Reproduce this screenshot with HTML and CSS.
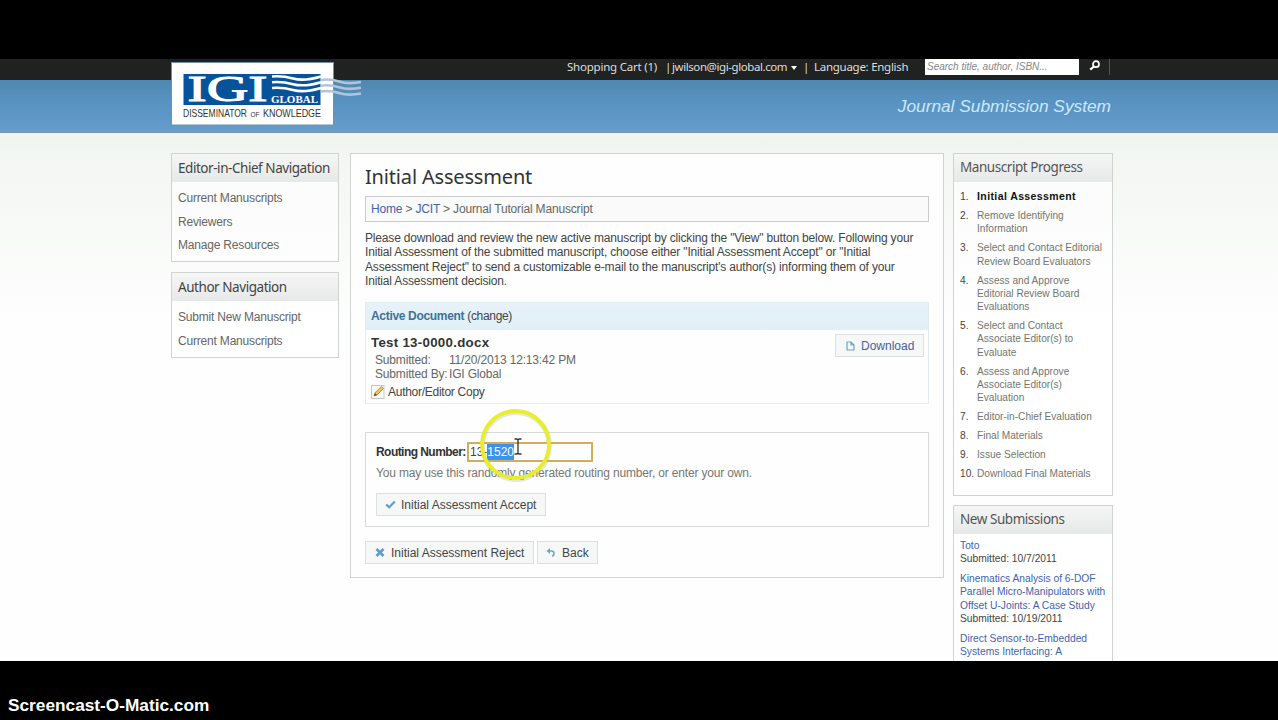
FILE: index.html
```html
<!DOCTYPE html>
<html lang="en">
<head>
<meta charset="utf-8">
<title>Initial Assessment - Journal Submission System</title>
<link rel="stylesheet" href="styles.css">
</head>
<body>
<div class="screen">
  <header class="header">
    <div class="topbar">
      <span class="cart">Shopping Cart (1)</span><span class="bar">|</span><span class="user">jwilson@igi-global.com</span><i class="caret"></i><span class="bar2">|</span><span class="lang">Language: English</span>
      <div class="search">Search title, author, ISBN...</div>
      <div class="search-btn"><svg width="12" height="12" viewBox="0 0 12 12"><circle cx="7" cy="4.2" r="3" fill="none" stroke="#fff" stroke-width="1.7"/><path d="M5 6.5L1.2 9.7" stroke="#fff" stroke-width="2.2"/></svg></div>
    </div>
    <div class="banner">Journal Submission System</div>
    <svg class="logo" width="192" height="66" viewBox="0 0 192 66">
      <rect x="0.5" y="0.5" width="162" height="62.500" fill="#fff" stroke="#6d93ae"/>
      <rect x="12.500" y="12" width="137" height="31" fill="#07539b"/>
      <text x="16.500" y="39" class="igi" textLength="80" lengthAdjust="spacingAndGlyphs">IGI</text>
      <g fill="none" stroke="#fff" stroke-width="2.600">
        <path d="M101 14.500q10 -1 21 2t28 -2M101 20.200q10 -1 21 2t28 -2M101 26q10 -1 21 2t28 -2"/>
      </g>
      <g fill="none" stroke="#b4c3d9" stroke-width="2.600">
        <path d="M150 18q9 -1.500 18 1.500t22 .5M150 23.700q9 -1.500 18 1.500t22 .5M150 29.500q9 -1.500 18 1.500t22 .5"/>
      </g>
      <text x="100" y="40.500" class="global" textLength="47" lengthAdjust="spacingAndGlyphs">GLOBAL</text>
      <text x="12" y="54.500" class="tag" textLength="64" lengthAdjust="spacingAndGlyphs">DISSEMINATOR</text>
      <text x="79.500" y="54.500" class="tag tag-of" textLength="9" lengthAdjust="spacingAndGlyphs">OF</text>
      <text x="92" y="54.500" class="tag" textLength="58" lengthAdjust="spacingAndGlyphs">KNOWLEDGE</text>
    </svg>
  </header>

  <div class="page">
    <aside class="left">
      <section class="box">
        <h3>Editor-in-Chief Navigation</h3>
        <ul class="nav"><li>Current Manuscripts</li><li>Reviewers</li><li>Manage Resources</li></ul>
      </section>
      <section class="box">
        <h3>Author Navigation</h3>
        <ul class="nav"><li>Submit New Manuscript</li><li>Current Manuscripts</li></ul>
      </section>
    </aside>

    <main class="main">
      <h1>Initial Assessment</h1>
      <div class="crumbs"><a>Home</a> &gt; <a>JCIT</a> &gt; Journal Tutorial Manuscript</div>
      <p class="intro">Please download and review the new active manuscript by clicking the "View" button below. Following your<br>Initial Assessment of the submitted manuscript, choose either "Initial Assessment Accept" or "Initial<br>Assessment Reject" to send a customizable e-mail to the manuscript's author(s) informing them of your<br>Initial Assessment decision.</p>
      <section class="doc">
        <div class="doc-head"><b>Active Document</b> (change)</div>
        <div class="doc-body">
          <div class="doc-info">
            <div class="doc-name">Test 13-0000.docx</div>
            <div class="meta"><span class="key">Submitted:</span><span>11/20/2013 12:13:42 PM</span></div>
            <div class="meta"><span class="key">Submitted By:</span><span>IGI Global</span></div>
            <div class="copy"><svg width="14" height="14" viewBox="0 0 14 14"><rect x="0.500" y="0.500" width="12.500" height="13" fill="#fbfbfb" stroke="#c3c7cb"/><path d="M3 11l1-3.300L10.500 1.500l2 2L6 10z" fill="#f2c646" stroke="#a8802b" stroke-width=".8"/><path d="M3 11l1-3 2 2z" fill="#555"/></svg><span>Author/Editor Copy</span></div>
          </div>
          <div class="btn download"><svg width="9" height="10" viewBox="0 0 9 10"><path d="M1 1h4l3 3v5H1zM5 1v3h3" fill="none" stroke="#68a6c4" stroke-width="1.200"/></svg><span>Download</span></div>
        </div>
      </section>
      <section class="routing">
        <div class="field"><b>Routing Number:</b><div class="input">13-<span class="sel">1520</span></div></div>
        <div class="hint">You may use this randomly generated routing number, or enter your own.</div>
        <div class="btn accept"><svg width="11" height="9" viewBox="0 0 11 9"><path d="M1.200 4.500l3 2.800L9.800 1.500" fill="none" stroke="#5b9fca" stroke-width="2.200"/></svg><span>Initial Assessment Accept</span></div>
      </section>
      <div class="actions">
        <div class="btn reject"><svg width="10" height="9" viewBox="0 0 10 9"><path d="M1.500 1l7 7M8.500 1l-7 7" stroke="#5b9fca" stroke-width="2.600"/></svg><span>Initial Assessment Reject</span></div>
        <div class="btn back"><svg width="10" height="9" viewBox="0 0 10 9"><path d="M0.500 3L4 0v6z" fill="#6aa8cc"/><path d="M3 3h2.500q2.500 0 2.500 2.500T6 8" fill="none" stroke="#6aa8cc" stroke-width="1.500"/></svg><span>Back</span></div>
      </div>
      <svg class="pointer" width="76" height="76" viewBox="0 0 76 76"><circle cx="38" cy="37" r="33.500" fill="none" stroke="#b9b9a0" stroke-opacity=".35" stroke-width="5"/><circle cx="37.500" cy="35.500" r="33.500" fill="none" stroke="#e9ee2c" stroke-width="3.800"/><path d="M36.500 30h2.500l1 1 1-1H43.500M40 31v13M36.500 45h2.500l1-1 1 1H43.500" fill="none" stroke="#333" stroke-width="1.300"/></svg>
    </main>

    <aside class="right">
      <section class="box progress">
        <h3>Manuscript Progress</h3>
        <ol>
          <li class="now"><span>Initial Assessment</span></li>
          <li><span>Remove Identifying<br>Information</span></li>
          <li><span>Select and Contact Editorial<br>Review Board Evaluators</span></li>
          <li><span>Assess and Approve<br>Editorial Review Board<br>Evaluations</span></li>
          <li><span>Select and Contact<br>Associate Editor(s) to<br>Evaluate</span></li>
          <li><span>Assess and Approve<br>Associate Editor(s)<br>Evaluation</span></li>
          <li><span>Editor-in-Chief Evaluation</span></li>
          <li><span>Final Materials</span></li>
          <li><span>Issue Selection</span></li>
          <li><span>Download Final Materials</span></li>
        </ol>
      </section>
      <section class="box subs">
        <h3>New Submissions</h3>
        <p><a>Toto</a><br>Submitted: 10/7/2011</p>
        <p><a>Kinematics Analysis of 6-DOF<br>Parallel Micro-Manipulators with<br>Offset U-Joints: A Case Study</a><br>Submitted: 10/19/2011</p>
        <p><a>Direct Sensor-to-Embedded<br>Systems Interfacing: A</a></p>
      </section>
    </aside>
  </div>
  <footer class="watermark">Screencast-O-Matic.com</footer>
</div>
</body>
</html>
```
FILE: styles.css
```css
* { box-sizing: border-box; }
body { margin: 0; background: #000; font-family: "Liberation Sans", Arial, sans-serif; color: #444; }
.screen { width: 1278px; height: 720px; padding-top: 59px; overflow: hidden; background: #000; }
h1, h3, p, ul, ol { margin: 0; padding: 0; font-weight: 400; list-style: none; }
a { color: #4263ae; }
.header { position: relative; height: 74px; white-space: nowrap; }
.topbar { height: 21px; background: #202221; display: flex; align-items: flex-start; padding-left: 567px; color: #dedede; font: 11.5px/16px "Noto Sans", sans-serif; }
.cart { width: 98px; letter-spacing: -.22px; }
.bar { width: 7px; }
.user { width: 118px; letter-spacing: -.42px; }
.caret { margin: 7px 0 0 1px; border: 3.5px solid transparent; border-top: 4px solid #fff; border-bottom: 0; }
.bar2 { margin-left: 6px; width: 11px; }
.lang { width: 111px; letter-spacing: -.27px; }
.search { width: 154px; height: 16px; background: #fff; color: #858585; font: italic 10px/15px "Liberation Sans", sans-serif; padding-left: 2px; }
.search-btn { width: 31px; height: 16px; border-right: 1px solid #555; padding: 1px 0 0 10px; line-height: 0; }
.banner { height: 53px; background: linear-gradient(#4f88ae, #5791c0 35%, #659dcc); border-bottom: 1px solid #7995a3; padding: 16px 167px 0 0; text-align: right; font: italic 17.3px/21px "Liberation Sans", sans-serif; color: #c9e9fc; }
.logo { position: absolute; left: 171px; top: 3px; }
.igi { font: 36px "Liberation Serif", serif; fill: #fff; stroke: #fff; stroke-width: 1px; }
.global { font: bold 11px "Liberation Serif", serif; fill: #fff; }
.tag { font: 11px "Liberation Sans", sans-serif; fill: #333; }
.tag-of { font-size: 8px; }
.page { height: 528px; overflow: hidden; padding: 20px 0 0 171px; display: flex; align-items: flex-start; background: linear-gradient(#edf4ed, #f4f6f4 25px, #fdfefd 190px, #fdfefd); white-space: nowrap; }
.box { border: 1px solid #d0d4d1; background: rgba(255,255,255,.5); }
.left { width: 168px; display: grid; grid-template-columns: 168px; gap: 10px; margin-right: 11px; }
h3 { font: 13.5px/28px "Noto Sans", sans-serif; height: 28px; padding-left: 6px; letter-spacing: -.45px; color: #444; background: linear-gradient(#f5f6f5, #e7e9e8); }
.nav { padding: 5px 0 3px 6px; font-size: 12px; letter-spacing: -.19px; line-height: 23.7px; color: #666; }
.main { position: relative; width: 594px; height: 425px; border: 1px solid #d0d4d1; background: #fdfefd; padding: 10px 14px; margin-right: 9px; font-size: 12px; letter-spacing: -.17px; }
h1 { font: 20px/26px "Noto Sans", sans-serif; letter-spacing: -.17px; color: #333; }
.crumbs { width: 564px; height: 26px; margin-top: 6px; border: 1px solid #c9ccca; background: #f9faf9; padding-left: 5px; line-height: 24px; color: #666; }
.intro { margin-top: 9px; line-height: 14.25px; }
.doc { width: 564px; height: 102px; margin-top: 14px; border: 1px solid #e2edf0; }
.doc-head { height: 27px; padding-left: 5px; line-height: 27px; letter-spacing: -.32px; background: linear-gradient(#e7f2fa, #e0f0f6); }
.doc-head b { color: #3c7398; }
.doc-body { display: flex; justify-content: space-between; padding: 4px 4px 0 5px; }
.doc-name { font-size: 13.3px; line-height: 18px; letter-spacing: .28px; font-weight: 700; color: #333; }
.meta { display: flex; padding-left: 4px; line-height: 14.3px; color: #666; }
.doc-name + .meta { margin-top: 1px; }
.key { width: 74px; }
.copy { display: flex; gap: 3px; margin-top: 3px; line-height: 14px; letter-spacing: -.27px; }
.btn { display: flex; align-items: center; height: 23px; border: 1px solid #dde0df; background: #f6f8f8; color: #444; font-size: 12px; letter-spacing: 0; }
.download { width: 89px; color: #4760a5; padding-left: 10px; gap: 6px; }
.routing { width: 564px; height: 95px; margin-top: 28px; border: 1px solid #d7dad8; padding: 9px 0 0 10px; }
.field { display: flex; align-items: center; height: 20px; color: #444; }
.field b { width: 91px; letter-spacing: -.55px; color: #333; }
.input { width: 126px; height: 20px; border: 2px solid #d2ae5c; background: #fff; letter-spacing: 0; line-height: 16px; padding-left: 1px; }
.sel { display: inline-block; height: 16px; background: #3b93ea; color: #fff; }
.hint { margin-top: 3px; line-height: 16px; color: #777; }
.accept { width: 170px; margin-top: 12px; padding-left: 8px; gap: 5px; }
.actions { display: flex; gap: 3px; margin-top: 14px; }
.reject { width: 169px; padding-left: 9px; gap: 6px; }
.back { width: 61px; padding-left: 8px; gap: 6px; }
.pointer { position: absolute; left: 127px; top: 255px; }
.right { width: 160px; display: grid; grid-template-columns: 160px; gap: 9px; font-size: 10.15px; line-height: 13.3px; color: #444; }
.right h3 { color: #555; line-height: 27px; }
.progress { height: 343px; }
ol { padding: 8px 0 0 6px; counter-reset: n; }
li { display: block; }
ol li { display: flex; margin-bottom: 5.7px; counter-increment: n; color: #727672; }
ol li::before { content: counter(n) "."; width: 17px; color: #444; flex: none; }
ol .now { color: #111; font-weight: 700; font-size: 10.5px; letter-spacing: .4px; }
ol .now::before { font-weight: 400; letter-spacing: 0; }
.subs { height: 170px; }
.subs p { padding-left: 6px; margin-bottom: 6.5px; font-size: 10.25px; }
.subs h3 + p { margin-top: 5px; }
.watermark { height: 59px; padding: 34px 0 0 8px; color: #fff; font-weight: 700; font-size: 17.25px; line-height: 20px; }
```
